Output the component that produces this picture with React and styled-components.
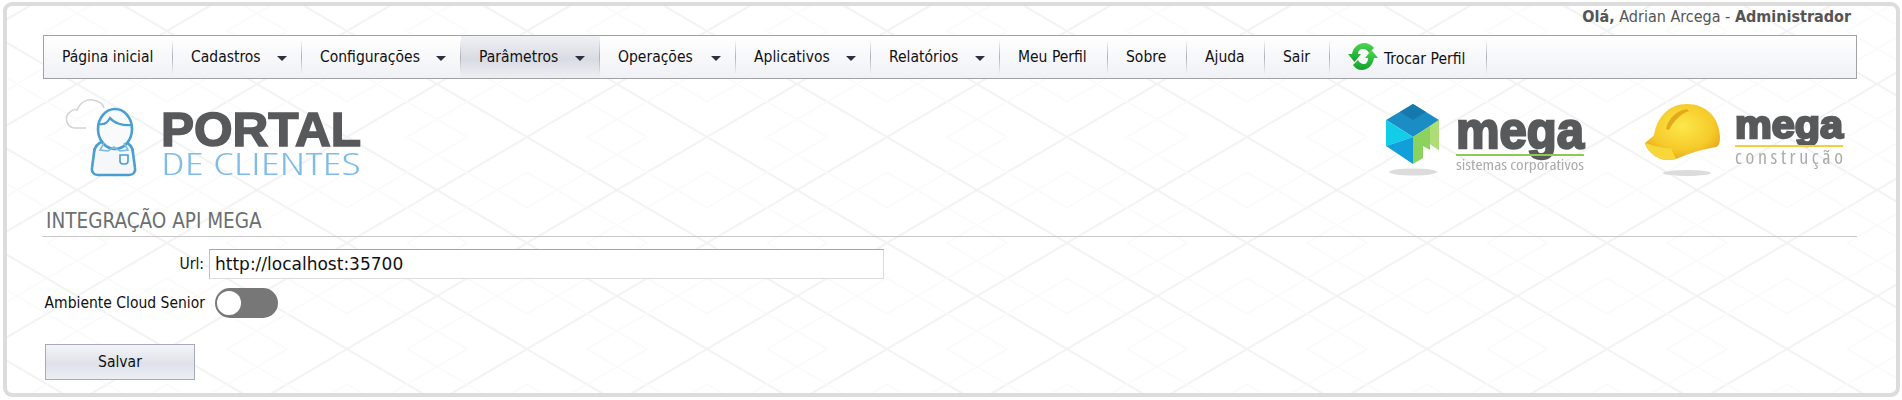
import styled, { createGlobalStyle } from 'styled-components'

const latticeTile = encodeURIComponent(
  `<svg xmlns="http://www.w3.org/2000/svg" width="180" height="106">` +
    `<g fill="none" stroke="#f3f3f3" stroke-width="2">` +
    `<path d="M0 0L180 106M0 106L180 0"/></g>` +
    `<g fill="none" stroke="#fafafa" stroke-width="1.5">` +
    `<path d="M-60 0L120 106M60 0L240 106M-60 106L120 0M60 106L240 0"/></g></svg>`
)

const GlobalStyle = createGlobalStyle`
  html, body {
    margin: 0;
    padding: 0;
    background: #fff;
  }
  body {
    font-family: "DejaVu Sans Condensed", "DejaVu Sans", sans-serif;
    font-stretch: condensed;
    font-size: 15.5px;
    color: #111;
  }
`

const Frame = styled.div`
  box-sizing: border-box;
  width: 1897px;
  height: 395px;
  margin: 2px 0 0 3px;
  padding: 0 39px 0 35px;
  border: 4px solid #dcdcdc;
  border-radius: 9px;
  background: #fff url("data:image/svg+xml,${latticeTile}") 160px 25px repeat;
`

const UserBar = styled.div`
  height: 29px;
  line-height: 22px;
  padding-right: 6px;
  text-align: right;
  color: #555;
  font-size: 16px;
  b {
    font-weight: 700;
  }
`

const NavBar = styled.nav`
  display: flex;
  box-sizing: border-box;
  height: 44px;
  margin-left: 1px;
  border: 1px solid #a2a2a6;
  background: linear-gradient(#ffffff, #f0f1f6);
`

const NavItem = styled.a`
  display: flex;
  align-items: center;
  box-sizing: border-box;
  flex: 0 0 ${({ $width }) => $width}px;
  padding: 0 14px 1px 18px;
  gap: 6px;
  color: #111;
  border-right: 1px solid transparent;
  border-image: linear-gradient(transparent 10%, #aeb0b8 50%, transparent 90%) 1;
  background: ${({ $active }) =>
    $active ? 'linear-gradient(#f0f1f4, #d9dbe3 55%, #eeeff3)' : 'none'};
`

const Caret = styled.span`
  margin-left: auto;
  margin-top: 3px;
  border-left: 5px solid transparent;
  border-right: 5px solid transparent;
  border-top: 5px solid #2e3040;
`

const SwapLabel = styled.span`
  margin-top: 5px;
  white-space: nowrap;
`

const LogoRow = styled.div`
  display: flex;
  align-items: flex-start;
  box-sizing: border-box;
  height: 130px;
  padding: 18px 0 0 24px;
`

const PartnerLogos = styled.div`
  display: flex;
  gap: 61px;
  margin: 7px 14px 0 auto;
`

const LogoArt = styled.svg`
  display: block;
  overflow: visible;
  filter: blur(0.35px);
`

const SectionTitle = styled.h2`
  box-sizing: border-box;
  height: 28px;
  margin: 0;
  padding-left: 4px;
  border-bottom: 1px solid #c8c8cc;
  color: #6b6f72;
  font-size: 20.5px;
  font-weight: 400;
  line-height: 24px;
`

const Form = styled.form`
  padding-top: 12px;
`

const FieldRow = styled.div`
  display: flex;
  align-items: center;
  gap: ${({ $gap }) => $gap}px;
  margin-bottom: 9px;
`

const FieldLabel = styled.label`
  flex: 0 0 ${({ $width }) => $width}px;
  text-align: right;
  color: #111;
  white-space: nowrap;
`

const TextInput = styled.input`
  box-sizing: border-box;
  width: 675px;
  height: 30px;
  padding: 0 5px;
  border: 1px solid #dcdcdc;
  border-top-color: #a4a4ac;
  border-left-color: #c0c0c6;
  background: #fff;
  color: #111;
  font-family: "DejaVu Sans", sans-serif;
  font-stretch: normal;
  font-size: 17px;
  outline: none;
`

const Toggle = styled.span`
  position: relative;
  display: block;
  width: 63px;
  height: 30px;
  border-radius: 15px;
  background: #777;
  &::before {
    content: '';
    position: absolute;
    left: 2px;
    top: 3px;
    width: 24px;
    height: 24px;
    border-radius: 50%;
    background: #fff;
    box-shadow: 0 0 1px #999;
  }
`

const SaveButton = styled.button`
  display: block;
  box-sizing: border-box;
  width: 150px;
  height: 36px;
  margin: 26px 0 0 3px;
  border: 1px solid #a6a9b8;
  background: linear-gradient(#f3f4f7, #dfe2ea 55%, #eceef3);
  color: #111;
  font-family: inherit;
  font-stretch: inherit;
  font-size: 15.5px;
`

const SwapIcon = () => (
  <svg width="30" height="27" viewBox="0 0 30 27" style={{ flex: 'none' }} aria-hidden="true">
    <defs>
      <linearGradient id="swapGreen" x1="0" y1="0" x2="0" y2="1">
        <stop offset="0" stopColor="#4fd650" />
        <stop offset="1" stopColor="#0fa02c" />
      </linearGradient>
    </defs>
    <path
      d="M0 11H4C5 5 10 0 16 0C20 0 24 2 26 5L21 10C20 8 18 6 15 6C12 6 10 8 10 11H13L6.5 19Z"
      fill="url(#swapGreen)"
    />
    <path
      d="M30 15H26C25 22 20 27 14 27C10 27 7 25 5 22L10 17C11 19 13 21 16 21C18 21 20 19 20 15H17L23.5 7Z"
      fill="url(#swapGreen)"
    />
  </svg>
)

const PortalLogo = () => (
  <LogoArt width="300" height="82" viewBox="0 0 300 82" role="img" aria-label="Portal de Clientes">
    {/* nuvem */}
    <path
      d="M8 31a9 9 0 0 1-4-16c2-2 5-3 7-2 3-7 9-11 16-10 6 1 10 4 11 8"
      fill="none"
      stroke="#d4d4d4"
      strokeWidth="1.6"
    />
    <path d="M8 31h12" fill="none" stroke="#d4d4d4" strokeWidth="1.6" />
    {/* corpo */}
    <path
      d="M38 44c-6 2-10 6-10 12l-2 15c-1 4 2 7 6 7h31c4 0 7-3 6-7l-2-15c0-6-4-10-10-12z"
      fill="#f5f7f8"
      stroke="#4a9fd2"
      strokeWidth="2.6"
    />
    {/* cabeca */}
    <ellipse cx="49" cy="32" rx="17" ry="20" fill="#f9fafb" stroke="#4a9fd2" strokeWidth="2.6" />
    <path d="M33 27c5 1 9-2 11-6 4 5 13 8 21 7" fill="none" stroke="#4a9fd2" strokeWidth="2.2" />
    {/* gola e bolso */}
    <path d="M38 46l-4 7 8 1 6-4 6 4 8-1-4-7" fill="none" stroke="#7dbbe0" strokeWidth="1.6" />
    <path d="M54 58h8v6c0 2-1 3-3 3h-2c-2 0-3-1-3-3z" fill="none" stroke="#4a9fd2" strokeWidth="1.6" />
    <text
      x="95"
      y="49"
      fill="#58595b"
      fontFamily="'Liberation Sans', sans-serif"
      fontWeight="700"
      fontSize="48"
      textLength="200"
      lengthAdjust="spacingAndGlyphs"
      stroke="#58595b"
      strokeWidth="1.6"
    >
      PORTAL
    </text>
    <text
      x="95"
      y="78"
      fill="#7dbde8"
      fontFamily="'Open Sans', sans-serif"
      fontWeight="300"
      fontSize="32"
      textLength="200"
      lengthAdjust="spacingAndGlyphs"
    >
      DE CLIENTES
    </text>
  </LogoArt>
)

const MegaWordmark = ({ x, y, size, width, lineY, lineColor, sub, subY, subSize, subAdjust }) => (
  <>
    <text
      x={x}
      y={y}
      fill="#58595b"
      stroke="#58595b"
      strokeWidth="2.4"
      fontFamily="'Liberation Sans', sans-serif"
      fontWeight="700"
      fontSize={size}
      textLength={width}
      lengthAdjust="spacingAndGlyphs"
    >
      mega
    </text>
    <rect x={x} y={lineY} width={width} height="2" fill={lineColor} />
    <text
      x={x}
      y={subY}
      fill="#ababab"
      fontFamily="'Open Sans', sans-serif"
      fontSize={subSize}
      textLength={width}
      lengthAdjust={subAdjust}
    >
      {sub}
    </text>
  </>
)

const MegaSistemasLogo = () => (
  <LogoArt width="198" height="74" viewBox="0 0 198 74" role="img" aria-label="Mega sistemas corporativos">
    <polygon points="0,16 27,0 53,16 41,24 27,33 13,24" fill="#1c8cc4" />
    <polygon points="14,8 27,0 40,8 27,16" fill="#1679ad" />
    <polygon points="0,16 0,42 27,33 13,24" fill="#12cde8" />
    <polygon points="0,42 27,60 27,33" fill="#109fd8" />
    <polygon points="27,33 41,24 53,16 53,46 44,40 44,46 37,42 37,54 27,60" fill="#8bd35e" />
    <polygon points="44,22 53,16 53,46 44,40" fill="#aedd78" />
    <ellipse cx="27" cy="68" rx="24" ry="3.5" fill="#dcdcdc" />
    <MegaWordmark
      x={70}
      y={44}
      size={52}
      width={128}
      lineY={50}
      lineColor="#8fca4e"
      sub="sistemas corporativos"
      subY={66}
      subSize={14}
      subAdjust="spacingAndGlyphs"
    />
  </LogoArt>
)

const MegaConstrucaoLogo = () => (
  <LogoArt width="198" height="74" viewBox="0 0 198 74" role="img" aria-label="Mega construção">
    <defs>
      <radialGradient id="helmetFill" cx="0.5" cy="0.4" r="0.65">
        <stop offset="0" stopColor="#fce84a" />
        <stop offset="0.65" stopColor="#f6c92a" />
        <stop offset="1" stopColor="#e2a012" />
      </radialGradient>
    </defs>
    <path
      d="M0 39c3-3 7-5 9-8C12 13 24 0 42 0c18 0 32 12 33 33 0 6-1 9-4 10-13 2-27 6-40 12-8 2-15 1-21-3C5 48 1 44 0 39z"
      fill="url(#helmetFill)"
    />
    <path d="M0 39c8 2 17 6 26 5l5 11c-8 2-15 1-21-3C5 48 1 44 0 39z" fill="#f7d73a" />
    <path d="M21 25C23 14 33 6 42 5l2 2C35 10 28 18 24 26z" fill="#e4a91a" />
    <ellipse cx="42" cy="69" rx="24" ry="3" fill="#dcdcdc" />
    <MegaWordmark
      x={90}
      y={34}
      size={38}
      width={108}
      lineY={41}
      lineColor="#f4cf3a"
      sub="construção"
      subY={60}
      subSize={20}
      subAdjust="spacing"
    />
  </LogoArt>
)

// Largura de cada item tirada da posicao dos separadores
const menu = [
  { label: 'Página inicial', width: 129 },
  { label: 'Cadastros', width: 129, caret: true },
  { label: 'Configurações', width: 159, caret: true },
  { label: 'Parâmetros', width: 139, caret: true, active: true },
  { label: 'Operações', width: 136, caret: true },
  { label: 'Aplicativos', width: 135, caret: true },
  { label: 'Relatórios', width: 129, caret: true },
  { label: 'Meu Perfil', width: 108 },
  { label: 'Sobre', width: 79 },
  { label: 'Ajuda', width: 78 },
  { label: 'Sair', width: 65 },
]

function App() {
  return (
    <>
      <GlobalStyle />
      <Frame>
        <UserBar>
          <b>Olá,</b> Adrian Arcega - <b>Administrador</b>
        </UserBar>
        <NavBar>
          {menu.map((item) => (
            <NavItem key={item.label} $width={item.width} $active={item.active}>
              {item.label}
              {item.caret && <Caret />}
            </NavItem>
          ))}
          <NavItem $width={157}>
            <SwapIcon />
            <SwapLabel>Trocar Perfil</SwapLabel>
          </NavItem>
        </NavBar>
        <LogoRow>
          <PortalLogo />
          <PartnerLogos>
            <MegaSistemasLogo />
            <MegaConstrucaoLogo />
          </PartnerLogos>
        </LogoRow>
        <SectionTitle>INTEGRAÇÃO API MEGA</SectionTitle>
        <Form>
          <FieldRow $gap={5}>
            <FieldLabel $width={162}>Url:</FieldLabel>
            <TextInput readOnly value="http://localhost:35700" />
          </FieldRow>
          <FieldRow $gap={10}>
            <FieldLabel $width={163}>Ambiente Cloud Senior</FieldLabel>
            <Toggle />
          </FieldRow>
          <SaveButton type="button">Salvar</SaveButton>
        </Form>
      </Frame>
    </>
  )
}

export default App
